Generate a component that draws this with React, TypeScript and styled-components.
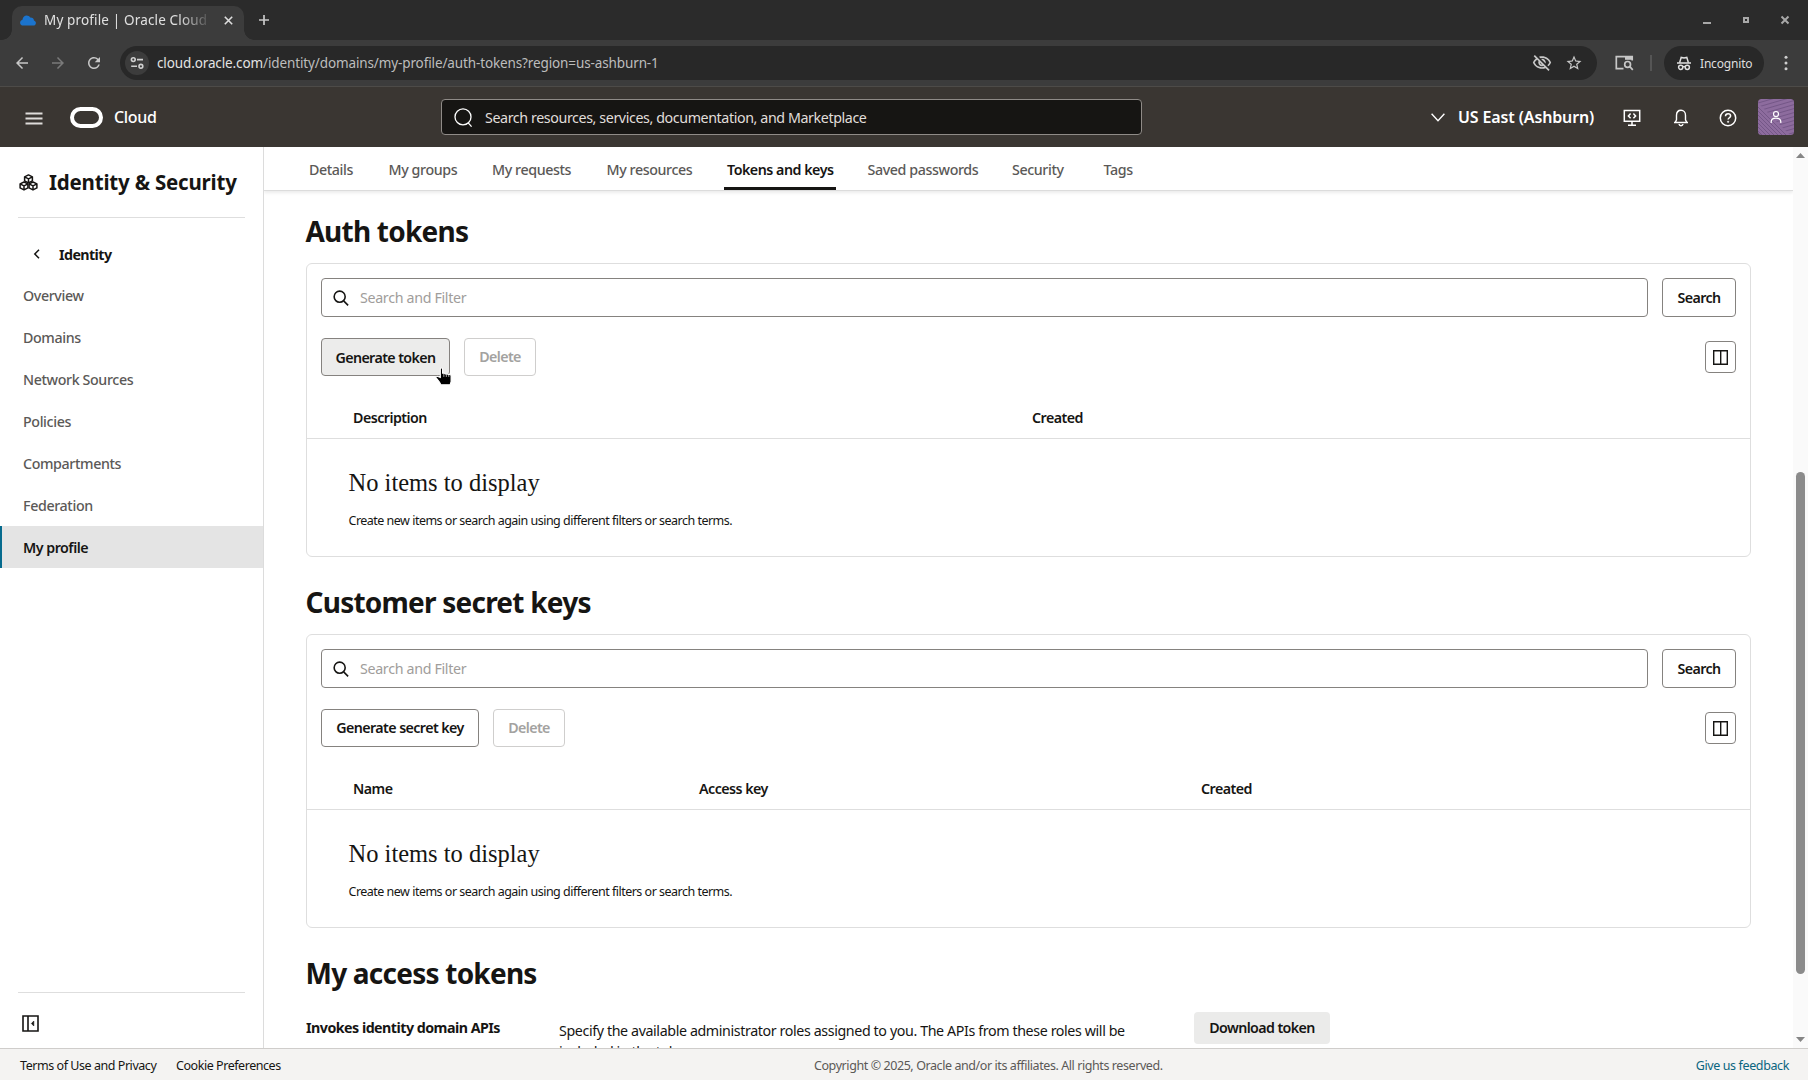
import React from 'react';
import styled, { createGlobalStyle, css } from 'styled-components';
import { MdArrowBack, MdArrowForward, MdRefresh, MdOutlineVisibilityOff, MdStarOutline } from 'react-icons/md';

const GlobalStyle = createGlobalStyle`
  *, *::before, *::after { box-sizing: border-box; }
  body {
    margin: 0;
    overflow: hidden;
    background: #fff;
    color: #161513;
    font-family: 'Noto Sans', 'Open Sans', sans-serif;
  }
  button { font-family: inherit; margin: 0; }
  svg { display: block; flex: none; }
`;

const Window = styled.div`
  display: flex;
  flex-direction: column;
  width: 1808px;
  height: 1080px;
  overflow: hidden;
`;

/* ---------- browser frame ---------- */

const TabStrip = styled.div`
  display: flex;
  align-items: flex-end;
  flex: none;
  height: 40px;
  padding-left: 12px;
  background: #2b2b2b;
  color: #c9c9c9;
`;

const BrowserTab = styled.div`
  display: flex;
  align-items: center;
  width: 232px;
  height: 34px;
  padding: 0 11px 6px 8px;
  border-radius: 10px 10px 0 0;
  background: #3c3c3c;
  position: relative;

  &::before,
  &::after {
    content: '';
    position: absolute;
    bottom: 0;
    width: 10px;
    height: 10px;
  }
  &::before {
    left: -10px;
    background: radial-gradient(circle at 0 0, transparent 9.5px, #3c3c3c 10px);
  }
  &::after {
    right: -10px;
    background: radial-gradient(circle at 100% 0, transparent 9.5px, #3c3c3c 10px);
  }
`;

const TabTitle = styled.span`
  width: 165px;
  margin-left: 8px;
  overflow: hidden;
  white-space: nowrap;
  font-size: 13.5px;
  line-height: 20px;
  letter-spacing: 0.15px;
  color: #e0e0e0;
  mask-image: linear-gradient(90deg, #000 82%, transparent 102%);
`;

const TabClose = styled.span`
  display: flex;
  margin-left: auto;
`;

const NewTab = styled.span`
  display: flex;
  margin: 0 0 14px 14px;
`;

const WindowControls = styled.div`
  display: flex;
  align-items: center;
  align-self: stretch;
  gap: 29px;
  margin-left: auto;
  padding-right: 18px;
`;

const Toolbar = styled.div`
  display: flex;
  align-items: center;
  flex: none;
  height: 47px;
  padding: 6px 17px 6px 13px;
  border-bottom: 1px solid #4d4b48;
  background: #3c3c3c;
  color: #c7c7c7;
`;

const NavButtons = styled.div`
  display: flex;
  gap: 18px;
  width: 107px;
`;

const Omnibox = styled.div`
  display: flex;
  align-items: center;
  width: 1477px;
  height: 34px;
  margin-right: 18px;
  padding: 0 14px 0 5px;
  border-radius: 17px;
  background: #282828;
`;

const SiteInfo = styled.span`
  display: flex;
  align-items: center;
  justify-content: center;
  width: 24px;
  height: 24px;
  border-radius: 50%;
  background: #3c3c3c;
`;

const Url = styled.span`
  margin-left: 8px;
  font-size: 13.5px;
  letter-spacing: -0.12px;
  color: #bdbdbd;

  b {
    font-weight: 400;
    color: #e3e3e3;
  }
`;

const OmniboxActions = styled.div`
  display: flex;
  align-items: center;
  gap: 13px;
  margin-left: auto;
`;

const ToolbarDivider = styled.span`
  width: 2px;
  height: 16px;
  margin: 0 12px 0 16px;
  background: #555;
`;

const Incognito = styled.div`
  display: flex;
  align-items: center;
  gap: 8px;
  width: 100px;
  height: 34px;
  margin-right: 20px;
  padding-left: 12px;
  border-radius: 17px;
  background: #282828;
  font-size: 12px;
  letter-spacing: -0.18px;
  color: #dedede;
`;

/* ---------- console header ---------- */

const Header = styled.header`
  display: flex;
  align-items: center;
  flex: none;
  height: 60px;
  padding: 0 14px 0 25px;
  background: #3a3632;
  color: #fff;
`;

const Brand = styled.div`
  display: flex;
  align-items: center;
  width: 416px;
`;

const MenuButton = styled.span`
  display: flex;
  margin-right: 27px;
  padding-top: 2px;
`;

const BrandName = styled.span`
  margin: -1px 0 0 11px;
  font-size: 16px;
  font-weight: 500;
  letter-spacing: -0.35px;
`;

const GlobalSearch = styled.div`
  display: flex;
  align-items: center;
  gap: 12px;
  width: 701px;
  height: 36px;
  padding: 1px 0 0 12px;
  border: 1px solid #8f8b87;
  border-radius: 4px;
  background: #161513;
  font-size: 14.25px;
  letter-spacing: -0.4px;
  color: #e0dedb;
`;

const HeaderActions = styled.div`
  display: flex;
  align-items: center;
  margin-left: auto;
`;

const Region = styled.span`
  width: 165px;
  margin-left: 13px;
  white-space: nowrap;
  font-size: 16px;
  font-weight: 600;
  line-height: 20px;
  letter-spacing: -0.13px;
`;

const HeaderIcon = styled.span<{ $gap: number }>`
  display: flex;
  margin-right: ${p => p.$gap}px;
  padding-top: 2px;
`;

/* ---------- page body ---------- */

const Body = styled.div`
  display: flex;
  flex: none;
  height: 901px;
`;

const Sidebar = styled.nav`
  display: flex;
  flex-direction: column;
  flex: none;
  width: 264px;
  border-right: 1px solid #dcdcdc;
`;

const SidebarTitle = styled.div`
  display: flex;
  align-items: center;
  gap: 11px;
  height: 71px;
  margin: 0 18px;
  padding-left: 1px;
  border-bottom: 1px solid #dedede;
  white-space: nowrap;
  font-size: 20.5px;
  font-weight: 700;
  letter-spacing: -0.2px;
`;

const SidebarBack = styled.div`
  display: flex;
  align-items: center;
  gap: 17px;
  height: 30px;
  margin: 21px 0 5px 32px;
  font-size: 14.25px;
  font-weight: 700;
  letter-spacing: -0.58px;
`;

const SidebarItem = styled.a<{ $active?: boolean }>`
  display: flex;
  align-items: center;
  height: 42px;
  padding-left: 21px;
  border-left: 2px solid transparent;
  font-size: 14.25px;
  font-weight: 500;
  letter-spacing: -0.38px;
  color: #5b5957;
  ${p => p.$active && css`
    border-left-color: #066b8e;
    background: #e4e4e4;
    color: #161513;
    font-weight: 600;
    letter-spacing: -0.5px;
  `}
`;

const SidebarFooter = styled.div`
  height: 56px;
  margin: auto 18px 0;
  padding: 22px 0 0 4px;
  border-top: 1px solid #dedede;
`;

const Main = styled.main`
  display: flex;
  flex-direction: column;
  flex: none;
  width: 1529px;
  height: 901px;
  overflow: hidden;
`;

const TabBar = styled.div`
  display: flex;
  flex: none;
  gap: 28.5px;
  height: 44px;
  padding-left: 42px;
  border-bottom: 1px solid #dcdcdc;
  box-shadow: 0 2px 3px rgba(0, 0, 0, 0.08);
`;

const PageTab = styled.a<{ $active?: boolean; $width: number }>`
  display: flex;
  align-items: center;
  width: ${p => p.$width}px;
  padding: 4px 0 0 3px;
  white-space: nowrap;
  border-bottom: 3px solid transparent;
  font-size: 14.25px;
  font-weight: 500;
  letter-spacing: -0.4px;
  color: #5b5957;
  ${p => p.$active && css`
    border-bottom-color: #161513;
    border-radius: 2px 2px 0 0;
    color: #161513;
    font-weight: 600;
    letter-spacing: -0.48px;
  `}
`;

const Content = styled.div`
  flex: 1;
  min-height: 0;
  padding: 20px 42px 0;
`;

const SectionTitle = styled.h2`
  height: 52px;
  margin: 0 0 0 -0.5px;
  font-size: 28px;
  font-weight: 700;
  line-height: 40px;
  letter-spacing: -0.77px;
`;

const Card = styled.section`
  height: 294px;
  margin-bottom: 25px;
  border: 1px solid #dedede;
  border-radius: 6px;
`;

const FilterRow = styled.div`
  display: flex;
  gap: 14px;
  padding: 14px 14px 0;
`;

const FilterField = styled.div`
  display: flex;
  align-items: center;
  gap: 11px;
  flex: 1;
  height: 39px;
  padding-left: 11px;
  border: 1px solid #85827f;
  border-radius: 4px;
  font-size: 14.25px;
  letter-spacing: -0.33px;
  color: #9f9d9b;

  svg { color: #161513; }
`;

const Button = styled.button<{ $width: number; $tall?: boolean; $hovered?: boolean }>`
  width: ${p => p.$width}px;
  height: ${p => (p.$tall ? 39 : 38)}px;
  padding: ${p => (p.$hovered ? '1px 0 0' : '0 0 1px')};
  border: 1px solid #85827f;
  border-radius: 4px;
  background: ${p => (p.$hovered ? '#ececeb' : '#fff')};
  white-space: nowrap;
  font-size: 14.25px;
  font-weight: 600;
  letter-spacing: -0.6px;
  color: #161513;

  &:disabled {
    border-color: #cfcecd;
    color: #a3a2a0;
  }
`;

const ActionRow = styled.div`
  display: flex;
  align-items: center;
  gap: 14px;
  padding: 21px 14px 0;
`;

const ButtonSlot = styled.div`
  position: relative;
  display: flex;
`;

const HandCursor = styled.svg`
  position: absolute;
  left: 113px;
  top: 29px;
`;

const IconButton = styled.button`
  display: flex;
  align-items: center;
  justify-content: center;
  width: 31px;
  height: 32px;
  margin-left: auto;
  padding: 0;
  border: 1px solid #85827f;
  border-radius: 4px;
  background: #fff;
  color: #161513;
`;

const ColumnHeads = styled.div<{ $columns: string }>`
  display: grid;
  grid-template-columns: ${p => p.$columns};
  align-items: end;
  height: 63px;
  padding: 0 0 10px 46px;
  border-bottom: 1px solid #dedede;
  font-size: 14.25px;
  font-weight: 600;
  line-height: 20px;
  letter-spacing: -0.54px;
`;

const EmptyTitle = styled.p`
  margin: 29px 0 0 41.5px;
  font-family: 'Liberation Serif', 'Times New Roman', serif;
  font-size: 24.5px;
  line-height: 30px;
`;

const EmptyHint = styled.p`
  margin: 14px 0 0 41.5px;
  font-size: 12.5px;
  line-height: 18px;
  letter-spacing: -0.51px;
`;

const TokenRow = styled.div`
  display: grid;
  grid-template-columns: 253px 635px auto;
  align-items: start;
  justify-content: start;
  padding-top: 7px;
`;

const TokenLabel = styled.div`
  padding-top: 6px;
  font-size: 14.25px;
  font-weight: 700;
  line-height: 20px;
  letter-spacing: -0.52px;
`;

const TokenText = styled.p`
  width: 580px;
  margin: 0;
  padding-top: 8px;
  font-size: 14.25px;
  line-height: 21px;
  letter-spacing: -0.39px;
`;

const SoftButton = styled.button`
  width: 136px;
  height: 32px;
  padding: 0 0 1px;
  border: 0;
  border-radius: 4px;
  background: #ebebea;
  font-size: 14.25px;
  font-weight: 600;
  letter-spacing: -0.6px;
  color: #161513;
`;

const Scrollbar = styled.div`
  display: flex;
  flex-direction: column;
  align-items: center;
  flex: 1;
  padding: 6px 0;
  background: #fafafa;
`;

const Thumb = styled.div`
  width: 9px;
  height: 502px;
  margin: 314px 0 auto;
  border-radius: 5px;
  background: #8b8b8b;
`;

const Footer = styled.footer`
  display: flex;
  align-items: center;
  flex: 1;
  padding: 2px 19px 0 20px;
  border-top: 1px solid #cfcdcb;
  background: #f4f3f2;
  font-size: 12.5px;
  letter-spacing: -0.45px;
`;

const FooterLink = styled.a<{ $width: number }>`
  width: ${p => p.$width}px;
  white-space: nowrap;
`;

const Copyright = styled.span`
  margin-left: 534px;
  letter-spacing: -0.42px;
  color: #5b5957;
`;

const Feedback = styled.a`
  margin-left: auto;
  letter-spacing: -0.38px;
  color: #0b6580;
`;

/* ---------- icons ---------- */

const SearchIcon = ({ size, stroke }: { size: number; stroke: number }) => (
  <svg width={size} height={size} viewBox="0 0 18 18" fill="none" stroke="currentColor" strokeWidth={stroke}>
    <circle cx="7.5" cy="7.5" r="6.2" />
    <path d="M12 12.200 17 17.300" />
  </svg>
);

const GlobalSearchIcon = () => (
  <svg width="19" height="19" viewBox="0 0 19 19" fill="none" stroke="#fff" strokeWidth="1.3">
    <circle cx="9" cy="8.9" r="8" />
    <path d="M14.200 14.900 17.600 18.600" />
  </svg>
);

const CloudIcon = () => (
  <svg width="16" height="11" viewBox="0 0 16 11" fill="#1b74ce">
    <path d="M3.200 10.600C1.400 10.600.1 9.300.1 7.700c0-1.400 1-2.600 2.400-2.900C2.700 2.300 4.400.5 6.700.5c1.500 0 2.700.7 3.400 1.900 2.300-.2 3.700 1 3.900 3 1.200.4 1.900 1.400 1.900 2.500 0 1.600-1.200 2.700-2.800 2.700z" />
  </svg>
);

const SiteInfoIcon = () => (
  <svg width="14" height="14" viewBox="0 0 14 14" fill="none" stroke="#d0d0d0" strokeWidth="1.6">
    <circle cx="3.3" cy="3.6" r="1.9" />
    <path d="M7 3.600h6M1.200 10.300h5.800" />
    <circle cx="10.9" cy="10.3" r="1.9" />
  </svg>
);

const PanelSearchIcon = () => (
  <svg width="19" height="16" viewBox="0 0 19 16" fill="none" stroke="currentColor" strokeWidth="1.7">
    <path d="M8.500 13.600H1.300V1.700h15.900v3.800" />
    <path d="M10 1h8v3.800h-8z" fill="currentColor" stroke="none" />
    <circle cx="12.6" cy="9.4" r="2.9" />
    <path d="m14.800 11.600 3 3.300" />
  </svg>
);

const IncognitoIcon = () => (
  <svg width="16" height="15" viewBox="0 0 16 15" fill="none" stroke="#e0e0e0" strokeWidth="1.5">
    <path d="M1 7h14" />
    <path d="M3.600 6.800 5.200 1.400 8 2.100l2.800-.7 1.600 5.400" />
    <circle cx="4.7" cy="11.3" r="2.1" />
    <circle cx="11.3" cy="11.3" r="2.1" />
    <path d="M6.800 10.900q1.200-.7 2.400 0" />
  </svg>
);

const KebabIcon = () => (
  <svg width="4" height="16" viewBox="0 0 4 16" fill="#cfcfcf">
    <circle cx="2" cy="2.3" r="1.5" />
    <circle cx="2" cy="8" r="1.5" />
    <circle cx="2" cy="13.7" r="1.5" />
  </svg>
);

const HamburgerIcon = () => (
  <svg width="18" height="13" viewBox="0 0 18 13" fill="none" stroke="#dedcda" strokeWidth="1.9">
    <path d="M.5 1.500h17M.5 6.500h17M.5 11.500h17" />
  </svg>
);

const OracleMark = () => (
  <svg width="33" height="21" viewBox="0 0 33 21" fill="none" stroke="#fff" strokeWidth="4">
    <rect x="2" y="2" width="29" height="17" rx="8.5" />
  </svg>
);

const ChevronDown = () => (
  <svg width="14" height="9" viewBox="0 0 14 9" fill="none" stroke="#fff" strokeWidth="1.4">
    <path d="M.6.8 7 7.700 13.400.8" />
  </svg>
);

const CloudShellIcon = () => (
  <svg width="18" height="18" viewBox="0 0 18 18" fill="none" stroke="#fff" strokeWidth="1.5">
    <path d="M1.300 1.500h15.400v10.800H1.300zM9 12.300V16M5 16.300h8" />
    <path d="M7.600 4.600 5.400 6.900l2.200 2.300M10.400 4.600l2.200 2.300-2.200 2.300" />
  </svg>
);

const BellIcon = () => (
  <svg width="16" height="18" viewBox="0 0 16 18" fill="none" stroke="#fff" strokeWidth="1.4">
    <path d="M1 13.500h14M2.300 13.300 3.500 10.800V6.200C3.500 3.300 5.400 1.300 8 1.300s4.500 2 4.500 4.900v4.600l1.200 2.500" />
    <path d="M6 15q.3 1.700 2 1.700T10 15" />
  </svg>
);

const HelpIcon = () => (
  <svg width="18" height="18" viewBox="0 0 18 18" fill="none" stroke="#fff" strokeWidth="1.5">
    <circle cx="9" cy="9" r="7.7" />
    <path d="M6.500 7.200C6.500 5.600 7.600 4.700 9.100 4.700s2.500.9 2.500 2.200c0 1.800-2.500 1.900-2.500 3.700" />
    <circle cx="9.1" cy="12.8" r=".7" fill="#fff" strokeWidth=".6" />
  </svg>
);

const Avatar = () => (
  <svg width="36" height="36" viewBox="0 0 36 36" fill="none">
    <defs>
      <clipPath id="avatar"><rect width="36" height="36" rx="3.5" /></clipPath>
      <clipPath id="lower"><path d="M0 4 32 36H0z" /></clipPath>
      <clipPath id="upper"><path d="M0 0h36v36h-4L0 4z" /></clipPath>
    </defs>
    <g clipPath="url(#avatar)">
      <rect width="36" height="36" fill="#8d6c9e" />
      <g stroke="#725584" strokeWidth=".9" clipPath="url(#lower)">
        <path d="M-2 6 30 38M-2 10 26 38M-2 14 22 38M-2 18 18 38M-2 22 14 38M-2 26 10 38M-2 30 6 38" />
      </g>
      <g stroke="#725584" strokeWidth=".9" clipPath="url(#upper)">
        <path d="M0 4 38-7M0 8 38-3M0 12 38 1M0 16 38 5M0 20 38 9M0 24 38 13M0 28 38 17M0 32 38 21M0 36 38 25M0 40 38 29M0 44 38 33" />
      </g>
      <g stroke="#fff" strokeWidth="1.2">
        <circle cx="18" cy="15" r="2.5" />
        <path d="M13.200 24v-1.200c0-2.200 1.800-3.700 4.800-3.700s4.800 1.500 4.800 3.700V24" />
      </g>
    </g>
  </svg>
);

const cube = (x: number, y: number) =>
  `M${x} ${y - 4}l3.9 1.900v4l-3.900 2-3.900-2v-4zM${x - 3.9} ${y - 2.1}l3.900 2 3.900-2M${x} ${y - 0.1}v4`;

const CubesIcon = () => (
  <svg width="19" height="17" viewBox="0 0 19 17" fill="none" stroke="currentColor" strokeWidth="1.5" strokeLinejoin="round">
    <path d={cube(9.5, 4.9)} />
    <path d={cube(5, 12)} />
    <path d={cube(14, 12)} />
  </svg>
);

const ChevronLeft = () => (
  <svg width="10" height="10" viewBox="0 0 10 10" fill="none" stroke="currentColor" strokeWidth="1.5">
    <path d="M7 .8 2.800 5 7 9.200" />
  </svg>
);

const CollapseIcon = () => (
  <svg width="17" height="17" viewBox="0 0 17 17" fill="none" stroke="currentColor" strokeWidth="1.6">
    <path d="M1 1h15v15H1zM6 1v15" />
    <path d="m11.800 6-2.400 2.500 2.400 2.500z" fill="currentColor" strokeWidth=".6" />
  </svg>
);

const ColumnsIcon = () => (
  <svg width="15" height="15" viewBox="0 0 15 15" fill="none" stroke="currentColor" strokeWidth="1.4">
    <path d="M.7.7h13.600v13.600H.7zM7.700.7v13.600" />
  </svg>
);

const Hand = () => (
  <HandCursor width="19" height="21" viewBox="0 0 18 20">
    <path
      d="M6 1.500v8.400L3 8.800 1.500 9.600l3.800 5 1.200 2.400h8.700l1-3V7.800l-1.500-.9-1.200.3-1.200-.9-1.600.3-1-.8-1.600.1V1.500L7 .8z"
      fill="#000"
      stroke="#fff"
      strokeWidth="1"
    />
    <path d="M9.300 6v3.500M11.700 6.600v2.900M14 7.300v2.200" stroke="#fff" strokeWidth=".6" />
  </HandCursor>
);

/* ---------- page parts ---------- */

interface TokenTableProps {
  title: string;
  action: string;
  actionWidth: number;
  columns: string;
  heads: string[];
  hovered?: boolean;
}

const TokenTable = ({ title, action, actionWidth, columns, heads, hovered }: TokenTableProps) => (
  <>
    <SectionTitle>{title}</SectionTitle>
    <Card>
      <FilterRow>
        <FilterField>
          <SearchIcon size={16} stroke={1.8} />
          Search and Filter
        </FilterField>
        <Button $width={74} $tall>Search</Button>
      </FilterRow>
      <ActionRow>
        <ButtonSlot>
          <Button $width={actionWidth} $hovered={hovered}>{action}</Button>
          {hovered && <Hand />}
        </ButtonSlot>
        <Button $width={72} $hovered={false} disabled>Delete</Button>
        <IconButton><ColumnsIcon /></IconButton>
      </ActionRow>
      <ColumnHeads $columns={columns}>
        {heads.map(head => <span key={head}>{head}</span>)}
      </ColumnHeads>
      <EmptyTitle>No items to display</EmptyTitle>
      <EmptyHint>Create new items or search again using different filters or search terms.</EmptyHint>
    </Card>
  </>
);

const sidebarItems = ['Overview', 'Domains', 'Network Sources', 'Policies', 'Compartments', 'Federation', 'My profile'];

const pageTabs: [string, number][] = [
  ['Details', 51],
  ['My groups', 75],
  ['My requests', 86],
  ['My resources', 92],
  ['Tokens and keys', 112],
  ['Saved passwords', 116],
  ['Security', 63],
  ['Tags', 37],
];

export default function App() {
  return (
    <Window>
      <GlobalStyle />
      <TabStrip>
        <BrowserTab>
          <CloudIcon />
          <TabTitle>My profile | Oracle Cloud</TabTitle>
          <TabClose>
            <svg width="9" height="9" viewBox="0 0 9 9" stroke="#dedede" strokeWidth="1.6"><path d="m.8.8 7.400 7.400M8.200.8.8 8.200" /></svg>
          </TabClose>
        </BrowserTab>
        <NewTab>
          <svg width="12" height="12" viewBox="0 0 12 12" stroke="#c9c9c9" strokeWidth="1.7"><path d="M6 1v10M1 6h10" /></svg>
        </NewTab>
        <WindowControls>
          <svg width="10" height="10" viewBox="0 0 10 10" stroke="#a8a8a8" strokeWidth="2"><path d="M1 8h8" /></svg>
          <svg width="10" height="10" viewBox="0 0 10 10" fill="none" stroke="#a8a8a8" strokeWidth="2"><path d="M3 3h4v4H3z" /></svg>
          <svg width="10" height="10" viewBox="0 0 10 10" stroke="#a8a8a8" strokeWidth="2"><path d="m1.500 1.500 7 7M8.500 1.500l-7 7" /></svg>
        </WindowControls>
      </TabStrip>

      <Toolbar>
        <NavButtons>
          <MdArrowBack size={18} />
          <MdArrowForward size={18} color="#7a7a7a" />
          <MdRefresh size={18} />
        </NavButtons>
        <Omnibox>
          <SiteInfo><SiteInfoIcon /></SiteInfo>
          <Url><b>cloud.oracle.com</b>/identity/domains/my-profile/auth-tokens?region=us-ashburn-1</Url>
          <OmniboxActions>
            <MdOutlineVisibilityOff size={20} />
            <MdStarOutline size={18} />
          </OmniboxActions>
        </Omnibox>
        <PanelSearchIcon />
        <ToolbarDivider />
        <Incognito>
          <IncognitoIcon />
          Incognito
        </Incognito>
        <KebabIcon />
      </Toolbar>

      <Header>
        <Brand>
          <MenuButton><HamburgerIcon /></MenuButton>
          <OracleMark />
          <BrandName>Cloud</BrandName>
        </Brand>
        <GlobalSearch>
          <GlobalSearchIcon />
          Search resources, services, documentation, and Marketplace
        </GlobalSearch>
        <HeaderActions>
          <ChevronDown />
          <Region>US East (Ashburn)</Region>
          <HeaderIcon $gap={32}><CloudShellIcon /></HeaderIcon>
          <HeaderIcon $gap={30}><BellIcon /></HeaderIcon>
          <HeaderIcon $gap={21}><HelpIcon /></HeaderIcon>
          <Avatar />
        </HeaderActions>
      </Header>

      <Body>
        <Sidebar>
          <SidebarTitle>
            <CubesIcon />
            Identity &amp; Security
          </SidebarTitle>
          <SidebarBack>
            <ChevronLeft />
            Identity
          </SidebarBack>
          {sidebarItems.map(item => (
            <SidebarItem key={item} $active={item === 'My profile'}>{item}</SidebarItem>
          ))}
          <SidebarFooter><CollapseIcon /></SidebarFooter>
        </Sidebar>

        <Main>
          <TabBar>
            {pageTabs.map(([label, width]) => (
              <PageTab key={label} $width={width} $active={label === 'Tokens and keys'}>{label}</PageTab>
            ))}
          </TabBar>
          <Content>
            <TokenTable
              title="Auth tokens"
              action="Generate token"
              actionWidth={129}
              columns="679px 1fr"
              heads={['Description', 'Created']}
              hovered
            />
            <TokenTable
              title="Customer secret keys"
              action="Generate secret key"
              actionWidth={158}
              columns="346px 502px 1fr"
              heads={['Name', 'Access key', 'Created']}
            />
            <SectionTitle>My access tokens</SectionTitle>
            <TokenRow>
              <TokenLabel>Invokes identity domain APIs</TokenLabel>
              <TokenText>
                Specify the available administrator roles assigned to you. The APIs from these roles will be
                included in the token.
              </TokenText>
              <SoftButton>Download token</SoftButton>
            </TokenRow>
          </Content>
        </Main>

        <Scrollbar>
          <svg width="9" height="5" viewBox="0 0 9 5" fill="#858585"><path d="M0 5 4.500 0 9 5z" /></svg>
          <Thumb />
          <svg width="9" height="5" viewBox="0 0 9 5" fill="#858585"><path d="M0 0h9L4.500 5z" /></svg>
        </Scrollbar>
      </Body>

      <Footer>
        <FooterLink $width={156}>Terms of Use and Privacy</FooterLink>
        <FooterLink $width={104}>Cookie Preferences</FooterLink>
        <Copyright>Copyright © 2025, Oracle and/or its affiliates. All rights reserved.</Copyright>
        <Feedback>Give us feedback</Feedback>
      </Footer>
    </Window>
  );
}
